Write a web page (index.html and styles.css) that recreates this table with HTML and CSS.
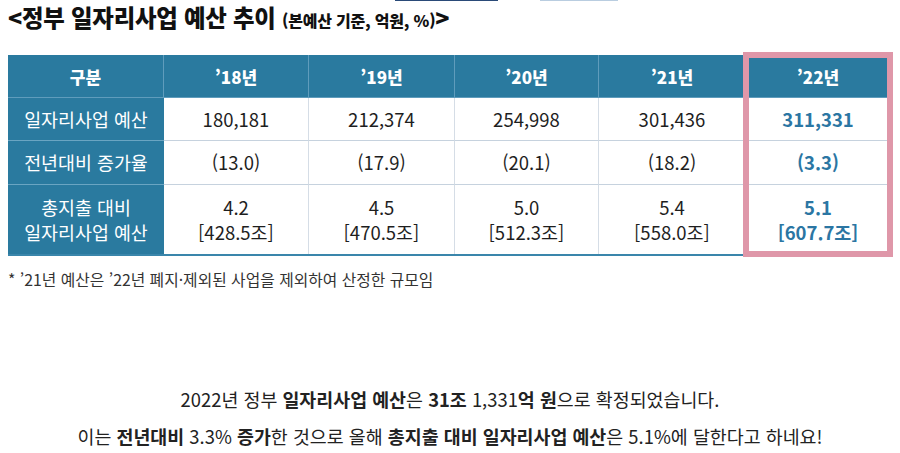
FILE: index.html
```html
<!DOCTYPE html>
<html lang="ko">
<head>
<meta charset="utf-8">
<link rel="stylesheet" href="styles.css">
</head>
<body>
<div class="page">
  <div class="strip"><span class="bar-navy"></span><span class="bar-light"></span></div>
  <h1 class="title">&lt;정부 일자리사업 예산 추이 <span class="sub">(본예산 기준, 억원, %)</span>&gt;</h1>
  <div class="tbl-wrap">
    <div class="tbl">
      <div class="c hd">구분</div>
      <div class="c hd">’18년</div>
      <div class="c hd">’19년</div>
      <div class="c hd">’20년</div>
      <div class="c hd">’21년</div>
      <div class="c hd last">’22년</div>

      <div class="c lab">일자리사업 예산</div>
      <div class="c">180,181</div>
      <div class="c">212,374</div>
      <div class="c">254,998</div>
      <div class="c">301,436</div>
      <div class="c hi last">311,331</div>

      <div class="c lab">전년대비 증가율</div>
      <div class="c">(13.0)</div>
      <div class="c">(17.9)</div>
      <div class="c">(20.1)</div>
      <div class="c">(18.2)</div>
      <div class="c hi last">(3.3)</div>

      <div class="c lab tall">총지출 대비<br>일자리사업 예산</div>
      <div class="c tall">4.2<br>[428.5조]</div>
      <div class="c tall">4.5<br>[470.5조]</div>
      <div class="c tall">5.0<br>[512.3조]</div>
      <div class="c tall">5.4<br>[558.0조]</div>
      <div class="c tall hi last">5.1<br>[607.7조]</div>
    </div>
    <div class="pink-box"></div>
  </div>
  <p class="note">* ’21년 예산은 ’22년 폐지·제외된 사업을 제외하여 산정한 규모임</p>
  <div class="summary">
    <p>2022년 정부 <b>일자리사업 예산</b>은 <b>31조</b> 1,331<b>억 원</b>으로 확정되었습니다.</p>
    <p>이는 <b>전년대비</b> 3.3% <b>증가</b>한 것으로 올해 <b>총지출 대비 일자리사업 예산</b>은 5.1%에 달한다고 하네요!</p>
  </div>
</div>
</body>
</html>
```

FILE: styles.css
```css
html, body {
  margin: 0;
  padding: 0;
  background: #ffffff;
}
body {
  font-family: "Noto Sans CJK KR", "Noto Sans", sans-serif;
  color: #222;
}
.page {
  padding: 0 8px;
}
.strip {
  display: flex;
  height: 1px;
}
.bar-navy {
  display: block;
  width: 103px;
  height: 1px;
  margin-left: 387px;
  background: #2a4a78;
}
.bar-light {
  display: block;
  width: 78px;
  height: 1px;
  margin-left: 42px;
  background: #b9cde0;
}
.title {
  margin: 1px 0 0 0;
  font-size: 23.4px;
  line-height: 30px;
  font-weight: 900;
  color: #111;
  letter-spacing: -0.2px;
}
.title .sub {
  font-size: 16px;
  font-weight: 900;
}
.tbl-wrap {
  position: relative;
  margin-top: 20px;
  width: 882px;
}
.tbl {
  display: grid;
  grid-template-columns: 156px 145px 146px 144px 147px 144px;
  grid-template-rows: 43px 43px 44px 69px;
  border-bottom: 2px solid #3a86ab;
}
.c {
  display: flex;
  align-items: center;
  justify-content: center;
  text-align: center;
  font-size: 18.5px;
  line-height: 25px;
  color: #1e1e1e;
  border-right: 1px solid #d5dde6;
  border-bottom: 1px solid #c6d2de;
  box-sizing: border-box;
}
.c.last {
  border-right: none;
}
.c.hd {
  background: #2a7a9f;
  color: #fff;
  font-weight: 900;
  font-size: 17px;
  border-right: 1px solid #5f9cbc;
  border-bottom: 1px solid #5f9cbc;
}
.c.hd.last {
  border-right: none;
}
.c.lab {
  background: #2a7a9f;
  color: #fff;
  font-size: 18.4px;
  border-right: none;
  border-bottom: 1px solid #6aa5c2;
}
.c.tall {
  border-bottom: none;
}
.c.hi {
  color: #2b76a3;
  font-weight: 700;
}
.pink-box {
  position: absolute;
  left: 735px;
  top: -3px;
  width: 150px;
  height: 205px;
  border: 6px solid #df97a9;
  box-sizing: border-box;
  pointer-events: none;
}
.note {
  margin: 14px 0 0 0;
  font-size: 15.8px;
  line-height: 20px;
  color: #333;
}
.summary {
  margin-top: 91px;
  text-align: center;
}
.summary p {
  margin: 0;
  font-size: 18.4px;
  line-height: 37px;
  color: #222;
}
.summary b {
  font-weight: 700;
}
```
